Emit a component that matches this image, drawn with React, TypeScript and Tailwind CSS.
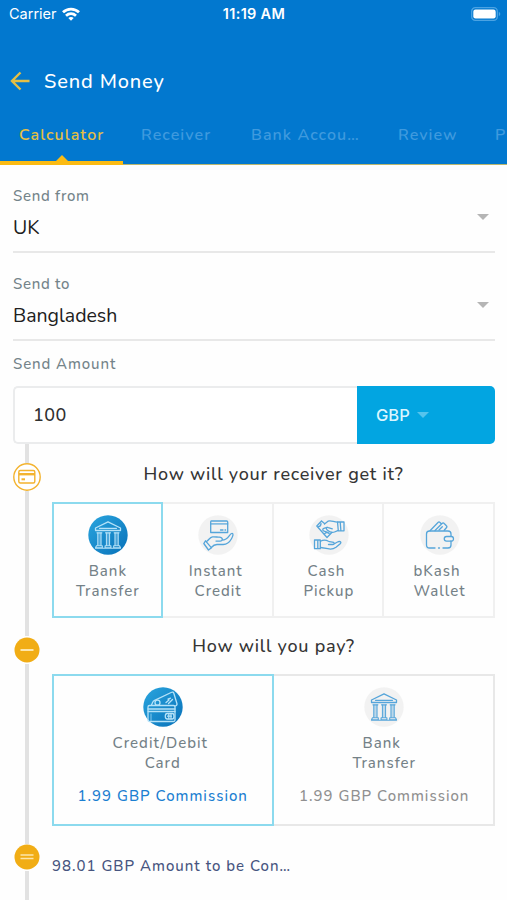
import type { ReactNode } from 'react';
import clsx from 'clsx';

const tabs = [
  { label: 'Calculator', className: 'w-[123px] text-[#e5bf45] pl-[19px]' },
  { label: 'Receiver', className: 'w-[107px] text-[#3f9ade] pl-[18px]' },
  { label: 'Bank Accou…', className: 'w-[149px] text-[#3f9ade] pl-[21px]' },
  { label: 'Review', className: 'w-[98px] text-[#3f9ade] pl-[19px]' },
  { label: 'P', className: 'text-[#3f9ade] pl-[18px]' },
];

function WifiIcon() {
  return (
    <svg width="18" height="14" viewBox="0 0 18 14" fill="none" stroke="white" strokeWidth="2.800">
      <path d="M1 5.200C5.500 1 12.500 1 17 5.200" />
      <path d="M4 8.700c2.900-2.600 7.100-2.600 10 0" />
      <path d="M9 13.700 6.300 11c1.500-1.400 3.900-1.400 5.400 0z" fill="white" stroke="none" />
    </svg>
  );
}

function BatteryIcon() {
  return (
    <svg width="30" height="14" viewBox="0 0 30 14" fill="none">
      <rect x=".7" y=".7" width="25.600" height="12.600" rx="3.600" stroke="#4ba3e3" strokeWidth="1.300" />
      <rect x="2.300" y="2.500" width="22.400" height="9" rx="2.200" fill="white" />
      <path d="M27.800 4.800c2 .8 2 3.600 0 4.400z" fill="#4ba3e3" />
    </svg>
  );
}

function BackIcon() {
  return (
    <svg width="20" height="20" viewBox="0 0 20 20" fill="none" stroke="#e5bf45" strokeWidth="2.400">
      <path d="M19.500 10H2M10.500 1.500 2 10l8.500 8.500" />
    </svg>
  );
}

function Caret({ className }: { className: string }) {
  return (
    <svg className={className} width="12" height="6" viewBox="0 0 12 6" fill="currentColor">
      <path d="M0 0h12L6 6z" />
    </svg>
  );
}

function IconDisc({ active, children }: { active?: boolean; children: ReactNode }) {
  return (
    <svg
      className="shrink-0 overflow-visible"
      width="40"
      height="40"
      viewBox="0 0 40 40"
      fill="none"
      stroke={active ? '#b5e2f8' : '#55a5da'}
      strokeWidth="1.300"
      strokeLinecap="round"
      strokeLinejoin="round"
    >
      <defs>
        <linearGradient id="disc" x1="0" y1="0" x2="1" y2="1">
          <stop offset="0" stopColor="#2aa5de" />
          <stop offset="1" stopColor="#0871b9" />
        </linearGradient>
      </defs>
      <circle cx="20" cy="20" r="19.700" fill={active ? 'url(#disc)' : '#f2f2f2'} stroke="none" />
      {children}
    </svg>
  );
}

function BankGlyph() {
  return (
    <>
      <path d="M20 6.800 7.500 13v2.500h25V13z" />
      <path d="M11.500 13.300h17M9 17.800h4.800M17.600 17.800h4.800M26.200 17.800H31" strokeWidth="1.300" />
      <path
        d="M11.400 18v12.500M20 18v12.500M28.600 18v12.500"
        strokeWidth="4"
        strokeOpacity=".35"
        strokeLinecap="butt"
      />
      <path d="M9.800 18v12.500M13 18v12.500M18.400 18v12.500M21.600 18v12.500M27 18v12.500M30.200 18v12.500" strokeWidth="1" />
      <path d="M8.500 30.800h5.800v2H7.500zM17.100 30.800h5.800v2h-5.800zM25.700 30.800h5.800l1 2h-6.800zM7.500 33.200h25" strokeWidth="1.100" />
    </>
  );
}

function HandCardGlyph() {
  return (
    <>
      <path d="M13.200 6h15.500c.8 0 1 .3 1 1v10.500h-17V7c0-.7 0-1 .5-1z" />
      <path d="M13 8.800h16.500" strokeWidth="1.800" strokeOpacity=".7" />
      <path d="M22.500 15H25M27 15h.6" />
      <path d="m7.500 25.800 6 7-3 2.200L5.800 28.500z" />
      <path d="M8.500 26.500c2.500-1.500 3.200-4.200 6-4.600 2.700-.3 4.500.3 6.700.3 2.300 0 3.400 1 3 2.600-.2.900-.9 1.300-2 1.300H18M24.200 25c3.300 0 5.300-1.800 7-4.200 1.400-2 2.300-2.900 3.300-2.300 1.200.8.200 3-1 5.200-2 3.600-4.500 5.800-8.300 5.800H19c-2.500 0-4 1-5.700 3" />
    </>
  );
}

function CashHandsGlyph() {
  return (
    <>
      <path d="m12.500 6-4.700 5L18 22.500l4.800-5M12.500 6l3 2.500" />
      <path d="M12 8.500c0 1.800-1 3-2.600 3.200M15.500 18.800c1.300-1.800 3.500-1.600 4.700-.3" />
      <path d="M15.500 9 19 6.200c3-1.200 5.500.8 9.500 1M28.800 15.700 25.500 17c-3.500 1.300-5.500-.5-7.500-2.200-1.500-1.300-.3-2.800 1.300-2.200l4 1.200M18 12.300l-3.200 1c-1.500.5-1.300 2.400.2 2.800l3 .9" />
      <path d="m28.500 6.800.8 9H35V7h-4.500zM31.200 7l.7 8.800" />
      <path d="M5.500 25h5.800v8.700H5.500zM8.800 25v8.700" />
      <path d="M11.500 26.300c3-1.800 5.500-1.500 8 0 1.500.8 3.300.2 5 1 1.200.7.600 2.200-.7 2.200h-4.300M25 29l3.500-2c2-1.100 4.200-.2 3 1.400L27 32.200c-2.500 1.800-5.300 2.200-8.200 1.500l-7.300-1.200" />
    </>
  );
}

function WalletGlyph() {
  return (
    <>
      <path d="M15 33H9.500c-2 0-3-1-3-3V19c0-2 1-3 3-3H28c2 0 3 1 3 3v2.300M31 26v4c0 2-1 3-3 3h-5M18.500 33h1" />
      <path d="M31.500 21.500h-5c-3 0-3 4.700 0 4.700h5.200c2.400 0 2.400-4.700-.2-4.700z" />
      <path d="m10 15.800 8-8.300c.8-.8 1.200-.8 2 0l1 1M15 15.500l7-7c.8-.8 1.500-.8 2.200 0l2.200 2.300c.7.700.7 1.300 0 2l-2.200 2.500M19 15l3.300-3.300" />
    </>
  );
}

function CardsGlyph() {
  return (
    <>
      <path d="M6.500 18.500h24c1 0 1.500.5 1.500 1.500v13c0 1-.5 1.500-1.500 1.500h-24C5.500 34.500 5 34 5 33V20c0-1 .5-1.500 1.500-1.500z" />
      <path d="M5 22h27M5.200 24.500H32" />
      <path d="M8 33.500V27" strokeWidth=".7" />
      <path d="m8.500 18 1.300-3c.3-.8.6-1 1.300-1.300l17-8.200c1.500-.7 2.300-.4 2.800 1l3 10c.4 1.300-.2 2-1.500 2.500" />
      <circle cx="14.500" cy="15.700" r="2.500" />
      <path d="m23 15.500 3-2.500m-.5 3.500 4-4M25 12.200l2.500-1" />
      <path d="M24.300 26.500h5c2.200 0 2.200 5.500 0 5.500h-5c-2.700 0-2.700-5.500 0-5.500z" />
      <path d="M25.800 27v4.500M28 27v4.500M24.500 29.200h4" />
    </>
  );
}

function SelectField({ label, value }: { label: string; value: string }) {
  return (
    <div className="h-[88px] border-b-2 border-[#e8e8e8]">
      <div className="pt-[21px] text-[15px] font-medium leading-5 tracking-[.700px] text-[#74848a]">{label}</div>
      <div className="flex items-center justify-between pr-[6px] pt-[8px]">
        <span className="text-[19.500px] leading-6 text-[#202020]">{value}</span>
        <Caret className="mb-[22px] text-[#b5b5b5]" />
      </div>
    </div>
  );
}

// Rail on the left joins the steps, content sits on the right
function Step({ icon, lead, className, children }: { icon: ReactNode; lead: string; className: string; children: ReactNode }) {
  return (
    <section className={clsx('flex', className)}>
      <div className="flex w-7 shrink-0 flex-col items-center">
        <div className={clsx('w-1 shrink-0 bg-[#e2e2e2]', lead)} />
        {icon}
        <div className="w-1 flex-1 bg-[#e2e2e2]" />
      </div>
      <div className="ml-[11px] flex-1">{children}</div>
    </section>
  );
}

function OptionLabel({ first, second, nudge }: { first: string; second: string; nudge?: boolean }) {
  return (
    <div className="flex flex-col items-center text-[15px] font-medium leading-[19.500px] tracking-[1px] text-[#748187]">
      <span className={clsx(nudge && 'pr-[5px]')}>{first}</span>
      <span>{second}</span>
    </div>
  );
}

const payouts = [
  { first: 'Bank', second: 'Transfer', glyph: <BankGlyph />, active: true },
  { first: 'Instant', second: 'Credit', glyph: <HandCardGlyph /> },
  { first: 'Cash', second: 'Pickup', glyph: <CashHandsGlyph /> },
  { first: 'bKash', second: 'Wallet', glyph: <WalletGlyph /> },
];

const payments = [
  { first: 'Credit/Debit', second: 'Card', glyph: <CardsGlyph />, active: true },
  { first: 'Bank', second: 'Transfer', glyph: <BankGlyph /> },
];

export default function App() {
  return (
    <div className="h-[900px] w-[507px] overflow-hidden bg-[#fefefe] font-['Nunito',Lato,sans-serif]">
      <header className="flex h-[165px] flex-col bg-[#0278cf]">
        <div className="grid h-[27px] grid-cols-3 items-center pl-[9px] pr-[6px] font-[Inter,sans-serif] text-[14.500px] text-white">
          <div className="flex items-center gap-[5px]">
            <span>Carrier</span>
            <WifiIcon />
          </div>
          <span className="pr-[2px] text-center font-semibold tracking-[.300px]">11:19 AM</span>
          <div className="flex justify-end">
            <BatteryIcon />
          </div>
        </div>
        <div className="flex h-[107px] items-center gap-[14px] pl-[10px]">
          <BackIcon />
          <h1 className="pt-[2px] text-xl font-medium tracking-[.850px] text-white">Send Money</h1>
        </div>
        <nav className="flex h-[27px] items-start whitespace-nowrap text-base leading-[3px] tracking-[1.050px]">
          {tabs.map((tab) => (
            <span key={tab.label} className={clsx('shrink-0 font-semibold', tab.className)}>
              {tab.label}
            </span>
          ))}
        </nav>
        <div className="flex h-1 items-end">
          <div className="relative h-1 w-[123px] bg-[#fbbb13]">
            <svg className="absolute -top-[6px] left-[55px]" width="14" height="7" viewBox="0 0 14 7" fill="#fbbb13">
              <path d="M0 7 7 0l7 7z" />
            </svg>
          </div>
          <div className="h-[1.500px] flex-1 bg-[#b9b66e]" />
        </div>
      </header>

      <main className="pl-[13px] pr-[12px]">
        <SelectField label="Send from" value="UK" />
        <SelectField label="Send to" value="Bangladesh" />

        <div className="pt-[13px] text-[15px] font-medium leading-5 tracking-[.900px] text-[#74848a]">Send Amount</div>
        <div className="mt-[12px] flex h-[58px]">
          <div className="flex w-[344px] items-center rounded-l-[5px] border-2 border-r-0 border-[#ebeced] bg-white pl-[18px] text-lg font-medium tracking-[.500px] text-[#303030]">
            100
          </div>
          <div className="flex flex-1 items-center gap-[7px] rounded-r-[5px] bg-[#02a5e1] pl-[19px] font-[Inter,sans-serif] text-[16.500px] font-medium text-[#d8f5ff]">
            GBP
            <Caret className="text-[#55c4ed]" />
          </div>
        </div>

        <Step
          className="h-[192px]"
          lead="h-[19px]"
          icon={
            <svg width="28" height="28" viewBox="0 0 28 28" fill="none" stroke="#f3b32f">
              <circle cx="14" cy="14" r="13.200" strokeWidth="1.400" fill="white" />
              <rect x="5.800" y="7.500" width="16" height="12.500" rx="1.500" strokeWidth="1.400" />
              <path d="M6 11.200h16" strokeWidth="2.400" />
              <path d="M8.500 16.300h3.500" strokeWidth="2" />
            </svg>
          }
        >
          <h2 className="pt-[18px] text-center text-lg font-medium leading-6 tracking-[.750px] text-[#353535]">
            How will your receiver get it?
          </h2>
          <div className="mt-[16px] grid h-[116px] grid-cols-4">
            {payouts.map((option) => (
              <div
                key={option.first}
                className={clsx(
                  'flex flex-col items-center gap-[7px] pt-[11px]',
                  option.active ? 'border-2 border-[#8cdaee] pl-px' : 'border-y-2 border-r-2 border-[#f0f0f0] pl-[2px]',
                )}
              >
                <IconDisc active={option.active}>{option.glyph}</IconDisc>
                <OptionLabel first={option.first} second={option.second} nudge={!option.active} />
              </div>
            ))}
          </div>
        </Step>

        <Step
          className="h-[208px]"
          lead="h-0"
          icon={
            <svg className="my-px" width="26" height="26" viewBox="0 0 26 26">
              <circle cx="13" cy="13" r="12.500" fill="#f1ad15" />
              <path d="M6.500 13h13" stroke="#fde6ab" strokeWidth="2" />
            </svg>
          }
        >
          <h2 className="text-center text-lg font-medium leading-5 tracking-[.750px] text-[#353535]">How will you pay?</h2>
          <div className="mt-[18px] grid h-[152px] grid-cols-2">
            {payments.map((option) => (
              <div
                key={option.first}
                className={clsx(
                  'flex flex-col items-center pt-[11px]',
                  option.active ? 'border-2 border-[#8cdaee]' : 'border-y-2 border-r-2 border-[#e8e8e8] pl-[2px]',
                )}
              >
                <IconDisc active={option.active}>{option.glyph}</IconDisc>
                <div className="h-[7px]" />
                <OptionLabel first={option.first} second={option.second} nudge />
                <div
                  className={clsx(
                    'mt-[13px] text-[15px] font-medium leading-5 tracking-[1px]',
                    option.active ? 'text-[#1b7fd1]' : 'text-[#909090]',
                  )}
                >
                  1.99 GBP Commission
                </div>
              </div>
            ))}
          </div>
        </Step>

        <Step
          className="h-[56px]"
          lead="h-0"
          icon={
            <svg className="mb-px" width="26" height="26" viewBox="0 0 26 26">
              <circle cx="13" cy="13" r="12.500" fill="#f1ad15" />
              <path d="M6.500 11h13M6.500 14.500h13" stroke="#fde6ab" strokeWidth="1.600" />
            </svg>
          }
        >
          <div className="pt-[12px] text-[15px] font-medium leading-5 tracking-[1px] text-[#475580]">
            98.01 GBP Amount to be Con…
          </div>
        </Step>
      </main>
    </div>
  );
}
